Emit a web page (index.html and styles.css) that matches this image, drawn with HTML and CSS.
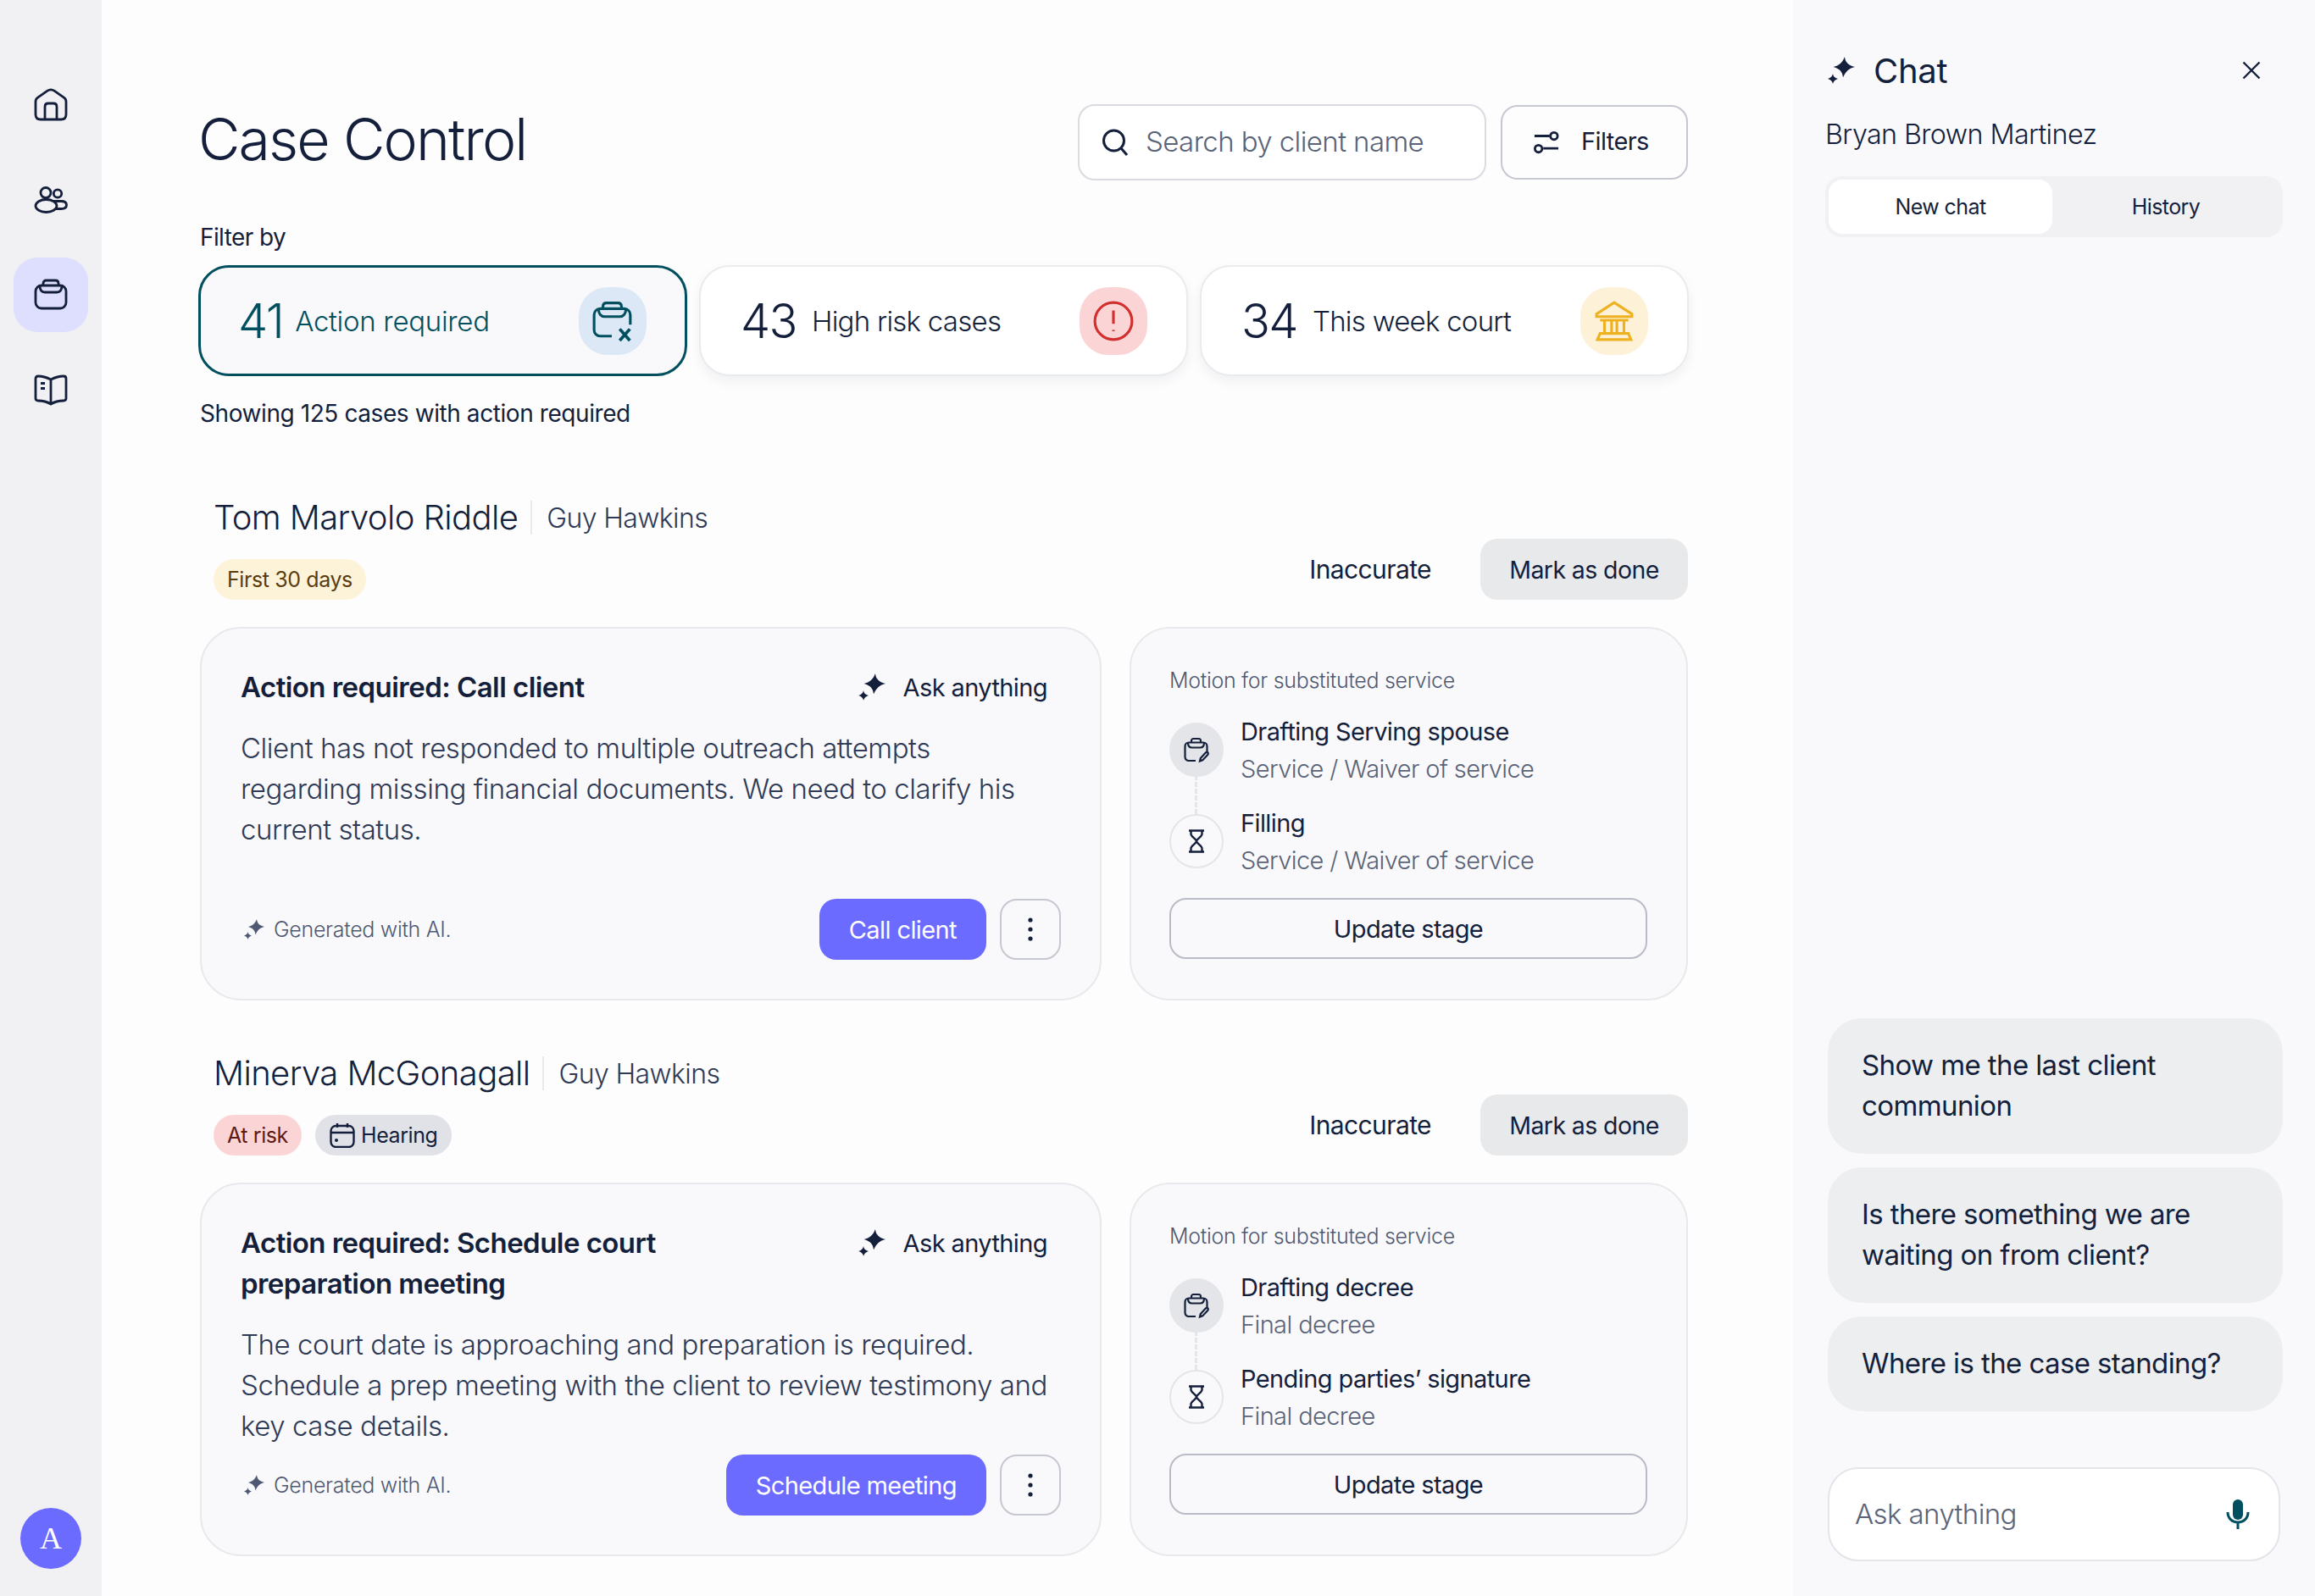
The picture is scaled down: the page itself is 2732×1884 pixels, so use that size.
FILE: index.html
```html
<!DOCTYPE html>
<html lang="en">
<head>
    <meta charset="UTF-8">
    <title>Case Control</title>
    <link rel="stylesheet" href="styles.css">
</head>
<body>
    <svg class="sprite" width="0" height="0">
        <symbol id="sparkle" viewBox="0 0 32 32">
            <path d="M20 0C20.500 6 24 10 32 12C25 13.500 21.500 17 18 24.500C17.500 18 14 14 6.500 12C13.500 10.500 17.500 6.500 20 0Z"/>
            <path d="M6 20C6.300 23 8 25 12 26C8.500 27 6.800 29 6 32C5.500 29 3.500 27 0 26C3.500 25 5.500 23 6 20Z"/>
        </symbol>
        <symbol id="case-edit" viewBox="0 0 32 32">
            <path d="M15 29H7c-2.600 0-4.500-1.900-4.500-4.500V12C2.500 9.400 4.400 7.500 7 7.500h17c2.600 0 4.500 1.900 4.500 4.500v7"/>
            <path d="M6 7.500c0 4 1.800 6 4.500 6h10c2.700 0 4.500-2 4.500-6M10 7.500V5.500C10 4 11 3 12.500 3h6C20 3 21 4 21 5.500v2"/>
            <path d="M20 29.500l.8-3.500 6-6.500c.8-.8 1.800-.8 2.500-.1s.7 1.700-.1 2.500l-6 6.500z"/>
        </symbol>
        <symbol id="hourglass" viewBox="0 0 20 28">
            <path d="M1 1.500h18M1 26.500h18M3.500 1.500v4.200c0 2.800 6.500 5.800 6.500 8.300s-6.500 5.500-6.500 8.300v4.200M16.500 1.500v4.200c0 2.800-6.500 5.800-6.500 8.300s6.500 5.500 6.500 8.300v4.200"/>
        </symbol>
        <symbol id="kebab" viewBox="0 0 8 32">
            <circle cx="4" cy="5" r="2.600"/><circle cx="4" cy="16" r="2.600"/><circle cx="4" cy="27" r="2.600"/>
        </symbol>
    </svg>

    <div class="app">
        <nav class="sidebar">
            <a class="nav-item">
                <svg class="nav-icon" viewBox="0 0 40 40"><path d="M2 16c0-2 .9-3.600 2.600-4.800L16 3.200c2.500-1.700 5.500-1.700 8 0l11.400 8C37.100 12.400 38 14 38 16v15c0 3.700-2.300 6-6 6H8c-3.700 0-6-2.300-6-6z"/><path d="M13 37V22c0-2.500 1.500-4 4-4h6c2.500 0 4 1.500 4 4v15"/></svg>
            </a>
            <a class="nav-item">
                <svg class="nav-icon" viewBox="0 0 40 40"><circle cx="14" cy="11.500" r="6"/><circle cx="28" cy="12.500" r="4.700"/><ellipse cx="14.500" cy="27" rx="12.500" ry="7.500"/><path d="M23 21.500h9c4 0 6.500 1.800 6.500 4.500S36 30.500 32 30.500h-6"/></svg>
            </a>
            <a class="nav-item nav-item-active">
                <svg class="nav-icon" viewBox="0 0 40 40"><rect x="2" y="9" width="36" height="27" rx="7"/><path d="M7 9c0 5 2 8 6 8h14c4 0 6-3 6-8"/><path d="M11 9V6.500C11 4.300 12.300 3 14.500 3h11C27.700 3 29 4.300 29 6.500V9"/></svg>
            </a>
            <a class="nav-item">
                <svg class="nav-icon" viewBox="0 0 40 40"><path d="M20 8C15 5.500 10 4 5 4 3 4 2 5 2 7v23c0 2 1 3 3 3 5.500 0 11 1.500 15 4 4-2.500 9.500-4 15-4 2 0 3-1 3-3V7c0-2-1-3-3-3-5 0-10 1.500-15 4zM20 8v29M8 12.500h5M8 18.500h5"/></svg>
            </a>
            <div class="avatar">A</div>
        </nav>

        <main class="main">
            <header class="page-head">
                <h1>Case Control</h1>
                <div class="page-tools">
                    <div class="search">
                        <svg class="search-icon" viewBox="0 0 32 32"><circle cx="14.500" cy="14" r="12"/><path d="M23 23l7 8"/></svg>
                        <span>Search by client name</span>
                    </div>
                    <button class="filters">
                        <svg class="filters-icon" viewBox="0 0 32 32"><path d="M1 8h19M12 23.500h19"/><circle cx="25.500" cy="8" r="4.500"/><circle cx="6" cy="24" r="4.500"/></svg>
                        <span>Filters</span>
                    </button>
                </div>
            </header>

            <p class="filter-label">Filter by</p>
            <section class="stats">
                <div class="stat stat-active">
                    <span class="stat-num">41</span>
                    <span class="stat-label stat-label-wide">Action required</span>
                    <span class="stat-pill pill-blue">
                        <svg viewBox="0 0 48 48"><path d="M23 41H10c-4 0-7-3-7-7V17c0-4 3-7 7-7h27c4 0 7 3 7 7v11"/><path d="M8 10c0 6 3 9 7 9h17c4 0 7-3 7-9M13 10V7.500C13 5 14.500 3.500 17 3.500h13c2.500 0 4 1.500 4 4V10"/><path d="M32 33l11.500 13M43.500 33L32 46" stroke-width="3.600"/></svg>
                    </span>
                </div>
                <div class="stat">
                    <span class="stat-num">43</span>
                    <span class="stat-label">High risk cases</span>
                    <span class="stat-pill pill-red">
                        <svg viewBox="0 0 48 48"><circle cx="24" cy="24" r="21"/><path d="M24 12v15M24 34v1.500"/></svg>
                    </span>
                </div>
                <div class="stat">
                    <span class="stat-num">34</span>
                    <span class="stat-label">This week court</span>
                    <span class="stat-pill pill-yellow">
                        <svg viewBox="0 0 48 48"><path d="M24 3L4 16v3h40v-3zM8 23h32M13 23v15M21 23v15M27 23v15M35 23v15M8 38h32l3 7H5z"/></svg>
                    </span>
                </div>
            </section>
            <p class="showing">Showing 125 cases with action required</p>

            <article class="case case-first">
                <div class="case-head">
                    <div>
                        <div class="case-names">
                            <h2>Tom Marvolo Riddle</h2>
                            <span class="case-owner">Guy Hawkins</span>
                        </div>
                        <div class="tags">
                            <span class="tag tag-yellow">First 30 days</span>
                        </div>
                    </div>
                    <div class="case-actions">
                        <button class="btn-plain">Inaccurate</button>
                        <button class="btn-grey">Mark as done</button>
                    </div>
                </div>
                <div class="case-body">
                    <div class="card action-card">
                        <div class="action-top">
                            <h3>Action required: Call client</h3>
                            <button class="ask"><svg class="sparkle"><use href="#sparkle"/></svg>Ask anything</button>
                        </div>
                        <p class="action-text">Client has not responded to multiple outreach attempts<br>regarding missing financial documents. We need to clarify his<br>current status.</p>
                        <div class="action-foot">
                            <span class="generated"><svg class="sparkle-small"><use href="#sparkle"/></svg>Generated with AI.</span>
                            <button class="btn-primary">Call client</button>
                            <button class="btn-more"><svg class="kebab"><use href="#kebab"/></svg></button>
                        </div>
                    </div>
                    <div class="card stage-card">
                        <p class="stage-title">Motion for substituted service</p>
                        <div class="step">
                            <span class="step-node step-node-on"><svg class="icon-case-edit"><use href="#case-edit"/></svg></span>
                            <div>
                                <p class="step-name">Drafting Serving spouse</p>
                                <p class="step-sub">Service / Waiver of service</p>
                            </div>
                        </div>
                        <div class="step">
                            <span class="step-node"><svg class="icon-hourglass"><use href="#hourglass"/></svg></span>
                            <div>
                                <p class="step-name">Filling</p>
                                <p class="step-sub">Service / Waiver of service</p>
                            </div>
                        </div>
                        <button class="btn-outline">Update stage</button>
                    </div>
                </div>
            </article>

            <article class="case">
                <div class="case-head">
                    <div>
                        <div class="case-names">
                            <h2>Minerva McGonagall</h2>
                            <span class="case-owner">Guy Hawkins</span>
                        </div>
                        <div class="tags">
                            <span class="tag tag-red">At risk</span>
                            <span class="tag tag-grey">
                                <svg class="tag-icon" viewBox="0 0 30 30"><rect x="1.500" y="4" width="27" height="25" rx="6"/><path d="M1.500 12h27M9 1v5M21 1v5"/><circle cx="8" cy="21" r="2" class="dot"/></svg>
                                Hearing
                            </span>
                        </div>
                    </div>
                    <div class="case-actions">
                        <button class="btn-plain">Inaccurate</button>
                        <button class="btn-grey">Mark as done</button>
                    </div>
                </div>
                <div class="case-body">
                    <div class="card action-card">
                        <div class="action-top">
                            <h3>Action required: Schedule court preparation meeting</h3>
                            <button class="ask"><svg class="sparkle"><use href="#sparkle"/></svg>Ask anything</button>
                        </div>
                        <p class="action-text">The court date is approaching and preparation is required.<br>Schedule a prep meeting with the client to review testimony and<br>key case details.</p>
                        <div class="action-foot">
                            <span class="generated"><svg class="sparkle-small"><use href="#sparkle"/></svg>Generated with AI.</span>
                            <button class="btn-primary">Schedule meeting</button>
                            <button class="btn-more"><svg class="kebab"><use href="#kebab"/></svg></button>
                        </div>
                    </div>
                    <div class="card stage-card">
                        <p class="stage-title">Motion for substituted service</p>
                        <div class="step">
                            <span class="step-node step-node-on"><svg class="icon-case-edit"><use href="#case-edit"/></svg></span>
                            <div>
                                <p class="step-name">Drafting decree</p>
                                <p class="step-sub">Final decree</p>
                            </div>
                        </div>
                        <div class="step">
                            <span class="step-node"><svg class="icon-hourglass"><use href="#hourglass"/></svg></span>
                            <div>
                                <p class="step-name">Pending parties’ signature</p>
                                <p class="step-sub">Final decree</p>
                            </div>
                        </div>
                        <button class="btn-outline">Update stage</button>
                    </div>
                </div>
            </article>
        </main>

        <aside class="chat">
            <div class="chat-head">
                <svg class="chat-sparkle"><use href="#sparkle"/></svg>
                <h2>Chat</h2>
                <svg class="chat-close" viewBox="0 0 22 22"><path d="M1.500 1.500l19 19M20.500 1.500l-19 19"/></svg>
            </div>
            <p class="chat-client">Bryan Brown Martinez</p>
            <div class="chat-tabs">
                <span class="chat-tab chat-tab-active">New chat</span>
                <span class="chat-tab">History</span>
            </div>
            <div class="suggestions">
                <button class="suggestion">Show me the last client communion</button>
                <button class="suggestion">Is there something we are waiting on from client?</button>
                <button class="suggestion">Where is the case standing?</button>
            </div>
            <div class="chat-input">
                <span>Ask anything</span>
                <svg class="mic" viewBox="0 0 28 36"><rect x="8" y="0" width="12" height="24" rx="6" class="mic-fill"/><path d="M2 15c0 7 5 12 12 12s12-5 12-12M14 27v8"/></svg>
            </div>
        </aside>
    </div>
</body>
</html>
```

FILE: styles.css
```css
* {
    box-sizing: border-box;
}
html, body {
    margin: 0;
    height: 100%;
}
body {
    background: #fdfdfd;
    color: #141f3c;
    font-family: "Inter", "Noto Sans", sans-serif;
    font-size: 30px;
    letter-spacing: -0.6px;
    overflow: hidden;
}
h1, h2, h3, p {
    margin: 0;
    font-weight: 400;
}
button {
    font: inherit;
    color: inherit;
    letter-spacing: inherit;
    background: none;
    border: none;
    padding: 0;
}
svg {
    display: block;
    flex: none;
}
.sprite {
    position: absolute;
}
.app {
    display: flex;
    height: 100vh;
}

/* left nav */
.sidebar {
    width: 120px;
    flex: none;
    background: #f1f1f4;
    display: flex;
    flex-direction: column;
    align-items: center;
    padding: 80px 0 32px;
    gap: 24px;
}
.nav-item {
    width: 88px;
    height: 88px;
    border-radius: 28px;
    display: flex;
    align-items: center;
    justify-content: center;
}
.nav-item-active {
    background: #dedeff;
}
.nav-icon {
    width: 40px;
    height: 40px;
    fill: none;
    stroke: #141f3c;
    stroke-width: 2.8;
}
.avatar {
    margin-top: auto;
    width: 72px;
    height: 72px;
    border-radius: 50%;
    background: #6c6bff;
    color: #fff;
    font-family: "Liberation Serif", serif;
    font-size: 36px;
    letter-spacing: 0;
    display: flex;
    align-items: center;
    justify-content: center;
}

/* main column */
.main {
    width: 1996px;
    flex: none;
    padding: 123px 124px 0 116px;
}
.page-head {
    display: flex;
    justify-content: space-between;
    align-items: center;
}
h1 {
    font-size: 68px;
    font-weight: 340;
    letter-spacing: -1.9px;
    margin: 0 0 8px -2px;
}
.page-tools {
    display: flex;
    align-items: center;
    gap: 17px;
}
.search {
    width: 482px;
    height: 90px;
    border: 2px solid #d9dbe1;
    border-radius: 20px;
    display: flex;
    align-items: center;
    gap: 20px;
    padding-left: 26px;
    background: #fff;
    color: #5a6378;
    font-size: 33px;
    font-weight: 300;
}
.search span, .filters span {
    margin-top: -3px;
}
.search-icon, .filters-icon {
    width: 32px;
    height: 32px;
    fill: none;
    stroke: #141f3c;
    stroke-width: 3;
}
.filters-icon {
    width: 30px;
    height: 30px;
}
.filters {
    width: 221px;
    height: 88px;
    border: 2px solid #c5c8d0;
    border-radius: 20px;
    display: flex;
    align-items: center;
    gap: 26px;
    padding-left: 37px;
    font-size: 29px;
}
.filter-label {
    margin-top: 49px;
    font-size: 28px;
    line-height: 36px;
}
.stats {
    display: grid;
    grid-template-columns: repeat(3, 1fr);
    gap: 14px;
    margin: 15px -1px 0 -2px;
}
.stat {
    height: 131px;
    border-radius: 36px;
    border: 2px solid #ebebee;
    background: #fff;
    box-shadow: 0 6px 14px rgba(20, 31, 60, 0.06);
    display: flex;
    align-items: center;
    padding: 0 46px 0 47px;
}
.stat-active {
    background: #f9f9fb;
    border: 3px solid #02505f;
    color: #02505f;
    box-shadow: none;
    padding: 0 45px 0 44px;
}
.stat-num {
    font-size: 56px;
    font-weight: 300;
    letter-spacing: -1.6px;
    margin-right: 18px;
}
.stat-active .stat-num {
    margin-right: 14px;
}
.stat-label {
    font-size: 33px;
    font-weight: 330;
    letter-spacing: -0.75px;
}
.stat-label-wide {
    letter-spacing: -0.3px;
}
.stat-pill {
    margin-left: auto;
    width: 80px;
    height: 80px;
    border-radius: 34px;
    display: flex;
    align-items: center;
    justify-content: center;
}
.stat-pill svg {
    width: 50px;
    height: 50px;
    fill: none;
    stroke-width: 3;
}
.pill-blue {
    background: #dce8f5;
}
.pill-blue svg {
    stroke: #02505f;
}
.pill-red {
    background: #fbd5d5;
}
.pill-red svg {
    stroke: #d22f2f;
}
.pill-yellow {
    background: #fdf2d8;
}
.pill-yellow svg {
    stroke: #eeb11f;
}
.showing {
    margin-top: 26px;
    font-size: 28px;
    line-height: 36px;
    letter-spacing: -0.42px;
}

/* case blocks */
.case {
    margin-top: 62px;
}
.case-first {
    margin-top: 81px;
}
.case-head {
    display: flex;
    justify-content: space-between;
    align-items: flex-end;
    padding-left: 16px;
}
.case-names {
    display: flex;
    align-items: center;
    height: 48px;
}
.case-names h2 {
    font-size: 40px;
    font-weight: 350;
    letter-spacing: -0.6px;
    padding-right: 15px;
    border-right: 2px solid #e8e9ec;
    line-height: 40px;
}
.case-owner {
    margin-left: 17px;
    font-size: 32px;
    font-weight: 300;
    color: #2e3a56;
}
.tags {
    display: flex;
    gap: 16px;
    margin-top: 25px;
}
.tag {
    height: 48px;
    border-radius: 24px;
    padding: 0 16px;
    display: flex;
    align-items: center;
    gap: 7px;
    font-size: 25px;
    letter-spacing: -0.4px;
}
.tag-yellow {
    background: #fdf3d9;
    color: #5a3d10;
}
.tag-red {
    background: #fbd5d5;
    color: #5e1a14;
}
.tag-grey {
    background: #e0e2e7;
    padding-left: 17px;
}
.tag-icon {
    width: 30px;
    height: 30px;
    fill: none;
    stroke: #141f3c;
    stroke-width: 2.4;
}
.tag-icon .dot {
    fill: #141f3c;
    stroke: none;
}
.case-actions {
    display: flex;
    align-items: center;
    gap: 58px;
}
.btn-plain {
    font-size: 30px;
}
.btn-grey {
    width: 245px;
    height: 72px;
    background: #e8e9eb;
    border-radius: 20px;
    font-size: 28.5px;
}
.case-body {
    display: grid;
    grid-template-columns: 1064px 659px;
    gap: 33px;
    margin-top: 32px;
}
.card {
    height: 441px;
    background: #f9f9fb;
    border: 2px solid #e8e9ec;
    border-radius: 48px;
}
.action-card {
    padding: 45px 46px 46px 46px;
    display: flex;
    flex-direction: column;
}
.action-top {
    display: flex;
    justify-content: space-between;
    align-items: flex-start;
}
h3 {
    max-width: 620px;
    font-size: 33px;
    font-weight: 600;
    line-height: 48px;
    letter-spacing: -0.55px;
}
.ask {
    display: flex;
    align-items: center;
    gap: 21px;
    height: 48px;
    margin-right: 16px;
    font-size: 29px;
}
.sparkle {
    width: 32px;
    height: 32px;
    fill: #141f3c;
}
.action-text {
    margin-top: 24px;
    font-size: 33px;
    font-weight: 330;
    line-height: 48px;
    letter-spacing: -0.45px;
    color: #2e3a56;
}
.action-foot {
    margin-top: auto;
    display: flex;
    align-items: center;
}
.generated {
    display: flex;
    align-items: center;
    gap: 11px;
    margin-right: auto;
    padding-left: 4px;
    font-size: 25px;
    font-weight: 300;
    color: #4f5a72;
    letter-spacing: -0.3px;
}
.sparkle-small {
    width: 24px;
    height: 24px;
    fill: #4f5a72;
}
.btn-primary {
    height: 72px;
    padding: 0 35px;
    background: #6c6bff;
    border-radius: 20px;
    color: #fff;
    font-size: 29px;
}
.btn-more {
    margin-left: 16px;
    width: 72px;
    height: 72px;
    border: 2px solid #c5c8d0;
    border-radius: 20px;
    display: flex;
    align-items: center;
    justify-content: center;
}
.kebab {
    width: 8px;
    height: 32px;
    fill: #141f3c;
}
.stage-card {
    padding: 45px 46px 47px 45px;
    display: flex;
    flex-direction: column;
}
.stage-title {
    font-size: 25px;
    font-weight: 300;
    line-height: 32px;
    color: #4f5a72;
    letter-spacing: -0.3px;
    margin-bottom: 23px;
}
.step {
    display: flex;
    gap: 20px;
    margin-bottom: 20px;
}
.step-name {
    font-size: 29px;
    line-height: 44px;
    letter-spacing: -0.6px;
}
.step-sub {
    font-size: 29px;
    font-weight: 300;
    line-height: 44px;
    color: #5a6378;
    letter-spacing: -0.6px;
}
.step-node {
    position: relative;
    width: 64px;
    height: 64px;
    margin-top: 11px;
    border: 2px solid #e4e5e9;
    border-radius: 50%;
    display: flex;
    align-items: center;
    justify-content: center;
    flex: none;
}
.step-node-on {
    background: #e4e5e9;
}
.step-node-on::after {
    content: "";
    position: absolute;
    top: 100%;
    left: 28px;
    height: 46px;
    border-left: 3px dashed #e4e5e9;
}
.icon-case-edit {
    width: 32px;
    height: 32px;
    fill: none;
    stroke: #141f3c;
    stroke-width: 2.2;
}
.icon-hourglass {
    width: 20px;
    height: 28px;
    fill: none;
    stroke: #141f3c;
    stroke-width: 2.4;
}
.btn-outline {
    margin-top: auto;
    height: 72px;
    border: 2px solid #b9bcc6;
    border-radius: 20px;
    font-size: 29px;
}

/* chat panel */
.chat {
    flex: 1;
    background: #f9f9fb;
    padding: 0 38px 41px 41px;
    display: flex;
    flex-direction: column;
}
.chat-head {
    display: flex;
    align-items: center;
    height: 40px;
    margin-top: 63px;
}
.chat-sparkle {
    width: 32px;
    height: 32px;
    fill: #141f3c;
}
.chat-head h2 {
    margin-left: 22px;
    font-size: 40px;
    font-weight: 400;
    letter-spacing: -0.3px;
}
.chat-close {
    margin-left: auto;
    margin-right: 26px;
    width: 22px;
    height: 22px;
    fill: none;
    stroke: #141f3c;
    stroke-width: 2.4;
}
.chat-client {
    margin: 36px 0 0 -3px;
    font-size: 32.3px;
    line-height: 40px;
    font-weight: 330;
}
.chat-tabs {
    margin-top: 29px;
    height: 72px;
    background: #f1f1f4;
    border-radius: 20px;
    padding: 4px;
    display: grid;
    grid-template-columns: 264px 1fr;
    margin-left: -3px;
}
.chat-tab {
    display: flex;
    align-items: center;
    justify-content: center;
    font-size: 25px;
    border-radius: 16px;
}
.chat-tab-active {
    background: #fff;
}
.suggestions {
    margin-top: auto;
    display: flex;
    flex-direction: column;
    gap: 16px;
}
.suggestion {
    background: #edeef0;
    border-radius: 40px;
    padding: 31px 40px 33px;
    font-size: 33px;
    line-height: 48px;
    text-align: left;
}
.chat-input {
    margin: 66px 3px 0 0;
    height: 111px;
    background: #fff;
    border: 2px solid #e4e5ea;
    border-radius: 36px;
    display: flex;
    align-items: center;
    justify-content: space-between;
    padding: 0 34px 0 30px;
    color: #5a6378;
    font-size: 33px;
    font-weight: 300;
}
.chat-input span {
    margin-top: -2px;
}
.mic {
    width: 28px;
    height: 36px;
    fill: none;
    stroke: #02505f;
    stroke-width: 3;
}
.mic-fill {
    fill: #02505f;
    stroke: none;
}
```
